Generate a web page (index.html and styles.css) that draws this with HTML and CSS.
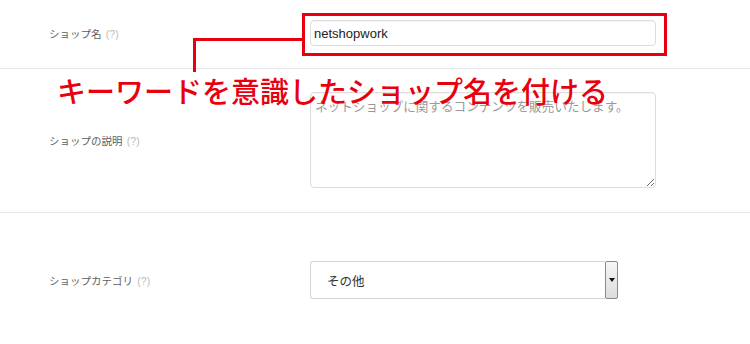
FILE: index.html
```html
<!DOCTYPE html>
<html lang="ja">
<head>
    <meta charset="UTF-8">
    <meta name="viewport" content="width=device-width, initial-scale=1.0">
    <title>ショップ設定</title>
    <link rel="stylesheet" href="styles.css">
</head>
<body>
    <form class="shop-form">
        <div class="row row-name">
            <label class="label" for="shopName">ショップ名 <span class="help">(?)</span></label>
            <input type="text" id="shopName" class="field" value="netshopwork">
        </div>
        <div class="row row-desc">
            <label class="label" for="shopDesc">ショップの説明 <span class="help">(?)</span></label>
            <textarea id="shopDesc" class="field area" placeholder="ネットショップに関するコンテンツを販売いたします。"></textarea>
        </div>
        <div class="row row-cat">
            <label class="label" for="shopCat">ショップカテゴリ <span class="help">(?)</span></label>
            <div class="select-box">
                <select id="shopCat" class="select">
                    <option>その他</option>
                </select>
                <span class="select-btn"><span class="arrow"></span></span>
            </div>
        </div>
    </form>

    <!-- annotation overlay -->
    <div class="note-box"></div>
    <div class="note-line"></div>
    <p class="note-text">キーワードを意識したショップ名を付ける</p>
</body>
</html>
```

FILE: styles.css
```css
body {
    margin: 0;
    background-color: #fff;
    font-family: "Noto Sans CJK JP", "Liberation Sans", sans-serif;
    position: relative;
    height: 344px;
    overflow: hidden;
}
.row {
    display: flex;
    align-items: center;
    border-bottom: 1px solid #e6e6e6;
}
.row-name {
    padding: 20px 0 22px;
}
.row-desc {
    padding: 23px 0 24px;
}
.row-cat {
    padding: 48px 0 60px;
    border-bottom: none;
}
.label {
    width: 261px;
    padding-left: 49px;
    font-size: 10.5px;
    color: #5e5e5e;
}
.help {
    font-family: "Liberation Sans", sans-serif;
    color: #bbb;
    margin-left: 2px;
}
.field {
    box-sizing: border-box;
    width: 346px;
    border: 1px solid #ddd;
    border-radius: 4px;
    background: #fff;
    box-shadow: inset 0 1px 1px rgba(0, 0, 0, 0.04);
    font-family: "Liberation Sans", "Noto Sans CJK JP", sans-serif;
    font-size: 13px;
    color: #222;
}
input.field {
    height: 26px;
    padding: 0 3px;
}
.area {
    height: 96px;
    padding: 3px 4px;
    font-family: "Noto Sans CJK JP", sans-serif;
    font-size: 12.6px;
    resize: vertical;
}
.area::placeholder {
    color: #999;
}
.select-box {
    display: flex;
    width: 308px;
    height: 38px;
}
.select {
    flex: 1;
    appearance: none;
    -webkit-appearance: none;
    border: 1px solid #d4d4d4;
    border-right: none;
    border-radius: 3px 0 0 3px;
    background: #fff;
    padding: 0 16px;
    font-family: "Noto Sans CJK JP", sans-serif;
    font-size: 12.5px;
    color: #333;
}
.select-btn {
    box-sizing: border-box;
    width: 13px;
    border: 1px solid #8a8a8a;
    border-radius: 2px;
    background: linear-gradient(#f6f6f6, #dcdcdc);
    display: flex;
    align-items: center;
    justify-content: center;
}
.arrow {
    width: 0;
    height: 0;
    border-left: 3px solid transparent;
    border-right: 3px solid transparent;
    border-top: 4px solid #111;
}

/* annotation */
.note-box {
    position: absolute;
    left: 302px;
    top: 13px;
    width: 359px;
    height: 37px;
    border: 3px solid #e8000e;
}
.note-line {
    position: absolute;
    left: 193px;
    top: 38px;
    width: 106px;
    height: 31px;
    border-top: 3px solid #e8000e;
    border-left: 3px solid #e8000e;
}
.note-text {
    position: absolute;
    left: 57px;
    top: 76px;
    margin: 0;
    font-size: 29px;
    font-weight: 500;
    line-height: 1;
    color: #e8000e;
    white-space: nowrap;
}
```
